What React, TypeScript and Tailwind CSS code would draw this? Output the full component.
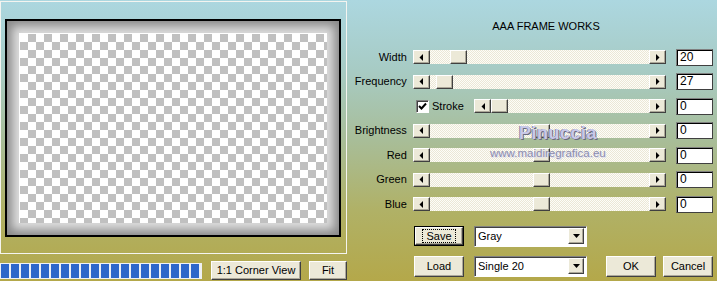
import React from "react";

const font = { fontFamily: '"Liberation Sans", Arial, sans-serif' };

function Btn({ children, className }: { children?: React.ReactNode; className: string }) {
  return (
    <div
      className={`flex items-center justify-center bg-[#ece9d8] border border-t-white border-l-white border-r-[#404040] border-b-[#404040] shadow-[inset_-1px_-1px_0_#aca899] text-[11px] text-black ${className}`}
    >
      {children}
    </div>
  );
}

function Arrow({ dir }: { dir: "left" | "right" }) {
  return (
    <Btn className="w-[17px] h-full shrink-0">
      <svg width="4" height="7" viewBox="0 0 4 7">
        {dir === "left" ? <polygon points="4,0 4,7 0.5,3.5" fill="#000" /> : <polygon points="0,0 0,7 3.5,3.5" fill="#000" />}
      </svg>
    </Btn>
  );
}

function Slider({ thumb, className }: { thumb: number; className: string }) {
  return (
    <div className={`flex h-[14px] ${className}`}>
      <Arrow dir="left" />
      <div className="relative flex-1 [background:repeating-conic-gradient(#fdfdf8_0_25%,#ebe7d6_0_50%)_0_0/2px_2px]">
        <div className="absolute top-0 h-full" style={{ left: thumb }}>
          <Btn className="w-[17px] h-[14px]" />
        </div>
      </div>
      <Arrow dir="right" />
    </div>
  );
}

function ValueBox({ v }: { v: string }) {
  return (
    <div className="ml-[10px] w-[37px] h-[17px] bg-white border border-t-[#808080] border-l-[#808080] border-b-[#404040] border-r-[#404040] shadow-[inset_1px_1px_0_#000] pl-[3px] text-[12px] leading-[15px] text-black">
      {v}
    </div>
  );
}

function Row({ label, thumb, v }: { label: string; thumb: number; v: string }) {
  return (
    <div className="flex items-center h-[24.5px]">
      <div className="w-[57px] text-right text-[11px] text-black leading-none">{label}</div>
      <Slider thumb={thumb} className="ml-[6px] w-[254px]" />
      <ValueBox v={v} />
    </div>
  );
}

function Dropdown({ text }: { text: string }) {
  return (
    <div className="ml-[10px] w-[113px] h-[21px] flex items-center bg-white border border-t-[#808080] border-l-[#808080] border-b-white border-r-white shadow-[inset_1px_1px_0_#404040] pl-[3px] pr-[2px]">
      <div className="flex-1 text-[11px] text-black">{text}</div>
      <Btn className="w-[16px] h-[16px]">
        <svg width="7" height="4" viewBox="0 0 7 4">
          <polygon points="0,0 7,0 3.5,4" fill="#000" />
        </svg>
      </Btn>
    </div>
  );
}

export default function App() {
  return (
    <div
      className="relative w-[717px] h-[281px] overflow-hidden flex gap-[2px] bg-[linear-gradient(to_bottom,#acd7e0_0%,#a7cbc4_25%,#a8bd98_50%,#b0b166_75%,#b4a84a_100%)]"
      style={font}
    >
      {/* left */}
      <div className="w-[348px] flex flex-col">
        <div className="mt-px w-[347px] h-[253px] border border-[#f4f4f0] pl-[4px] pt-[17px]">
          <div className="w-[336px] h-[218px] border-2 border-black bg-[#dcdcdc] shadow-[inset_0_0_10px_5px_#8a8a8a] p-[12px]">
            <div className="w-full h-full border-t border-l border-white [background:repeating-conic-gradient(#c0c0c0_0_25%,#ffffff_0_50%)_0_0/16px_16px]" />
          </div>
        </div>
        <div className="mt-[7px] flex items-center h-[19px]">
          <div className="w-[202px] h-[16px] flex gap-[2px] bg-[#eef0f4] p-px">
            {Array.from({ length: 20 }).map((_, i) => (
              <div key={i} className="w-[8px] h-full bg-[#2e67c9]" />
            ))}
          </div>
          <Btn className="ml-[9px] w-[90px] h-[19px]">1:1 Corner View</Btn>
          <Btn className="ml-[8px] w-[38px] h-[19px]">Fit</Btn>
        </div>
      </div>

      {/* right */}
      <div className="flex-1 flex flex-col pt-[19px]">
        <div className="pl-[25px] text-center text-[11px] leading-[14px] text-black">AAA FRAME WORKS</div>
        <div className="mt-[12px] w-[363px] flex flex-col">
          <Row label="Width" thumb={20} v="20" />
          <Row label="Frequency" thumb={6} v="27" />
          <div className="flex items-center h-[24.5px]">
            <div className="w-[66px]" />
            <div className="w-[13px] h-[13px] bg-white border border-t-[#808080] border-l-[#808080] border-b-white border-r-white shadow-[inset_1px_1px_0_#404040] flex items-center justify-center">
              <svg width="9" height="9" viewBox="0 0 9 9">
                <polyline points="1,4 3.5,6.5 8,1.5" fill="none" stroke="#000" strokeWidth="2" />
              </svg>
            </div>
            <div className="ml-[3px] text-[11px] leading-none text-black">Stroke</div>
            <Slider thumb={0} className="ml-auto w-[192px]" />
            <ValueBox v="0" />
          </div>
          <Row label="Brightness" thumb={103} v="0" />
          <Row label="Red" thumb={103} v="0" />
          <Row label="Green" thumb={103} v="0" />
          <Row label="Blue" thumb={103} v="0" />
        </div>
        <div className="mt-[9px] flex items-center pl-[64px]">
          <div className="w-[50px] h-[20px] border border-black">
            <Btn className="w-full h-full">
              <span className="border border-dotted border-black px-[3px] leading-[12px]">Save</span>
            </Btn>
          </div>
          <Dropdown text="Gray" />
        </div>
        <div className="mt-[9px] flex items-center pl-[64px]">
          <Btn className="w-[50px] h-[21px]">Load</Btn>
          <Dropdown text="Single 20" />
          <Btn className="ml-[19px] w-[50px] h-[21px]">OK</Btn>
          <Btn className="ml-[7px] w-[50px] h-[21px]">Cancel</Btn>
        </div>
      </div>

      {/* watermark overlay */}
      <div className="absolute left-[519px] top-[124px] text-[18px] leading-none font-bold tracking-[0.5px] text-[#c8c8e8] [text-shadow:1px_1px_0_#6a6a80,-1px_0_0_#8a8aa0]">
        Pinuccia
      </div>
      <div className="absolute left-[490px] top-[148px] text-[11.5px] leading-none text-[#8c8cae] [text-shadow:1px_1px_0_#e0e0f0]">
        www.maidiregrafica.eu
      </div>
    </div>
  );
}
